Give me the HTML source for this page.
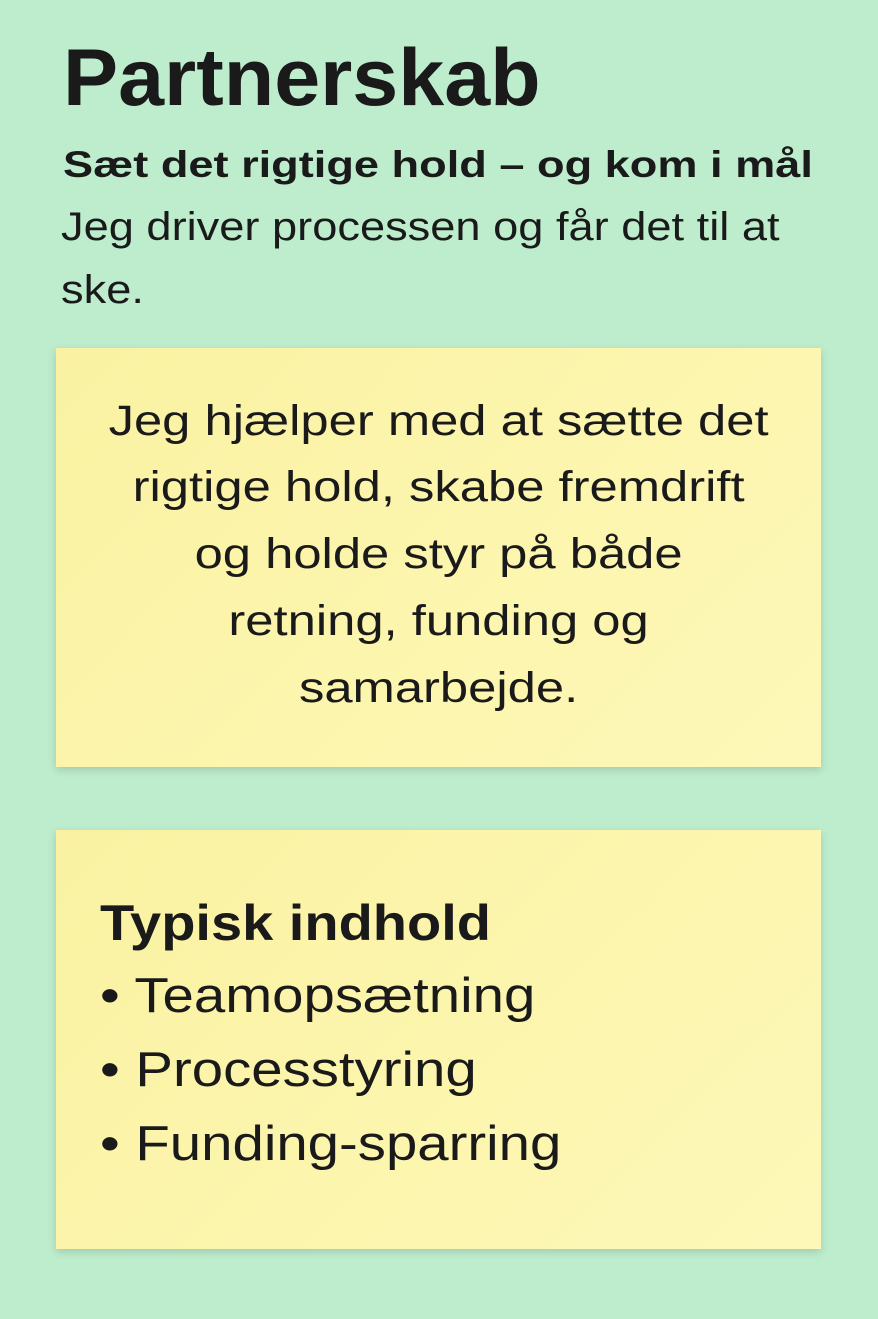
<!DOCTYPE html>
<html><head><meta charset="utf-8"><style>
html,body{margin:0;padding:0}
body{width:878px;height:1319px;background:#bdedcd;font-family:"Liberation Sans","DejaVu Sans",sans-serif;color:#1a1a1a;position:relative;overflow:hidden}
.a{position:absolute;white-space:nowrap;line-height:1;transform-origin:0 0}
.card{position:absolute;left:56px;width:765px;height:419px;background:linear-gradient(135deg,#faf2a2,#fdf8b8);box-shadow:0 3px 8px rgba(0,0,0,0.15)}
.c{position:absolute;left:0;width:765px;text-align:center;font-size:43px;line-height:1;transform:scaleX(1.18);transform-origin:382px 0}
</style></head><body>
<div class="a" style="left:63px;top:38px;font-size:81px;font-weight:bold;transform:scaleX(1.02)">Partnerskab</div>
<div class="a" style="left:63px;top:146px;font-size:37px;font-weight:bold;transform:scaleX(1.22)">Sæt det rigtige hold – og kom i mål</div>
<div class="a" style="left:61px;top:207px;font-size:40px;transform:scaleX(1.13)">Jeg driver processen og får det til at</div>
<div class="a" style="left:61px;top:270px;font-size:40px;transform:scaleX(1.13)">ske.</div>
<div class="card" style="top:348px">
<div class="c" style="top:52px">Jeg hjælper med at sætte det</div>
<div class="c" style="top:118px">rigtige hold, skabe fremdrift</div>
<div class="c" style="top:185px">og holde styr på både</div>
<div class="c" style="top:252px">retning, funding og</div>
<div class="c" style="top:319px">samarbejde.</div>
</div>
<div class="card" style="top:830px">
<div class="a" style="left:44px;top:68px;font-size:50px;font-weight:bold;transform:scaleX(1.12)">Typisk indhold</div>
<div class="a" style="left:44px;top:142px;font-size:49px;transform:scaleX(1.15)">• Teamopsætning</div>
<div class="a" style="left:44px;top:216px;font-size:49px;transform:scaleX(1.15)">• Processtyring</div>
<div class="a" style="left:44px;top:290px;font-size:49px;transform:scaleX(1.15)">• Funding-sparring</div>
</div>
</body></html>
